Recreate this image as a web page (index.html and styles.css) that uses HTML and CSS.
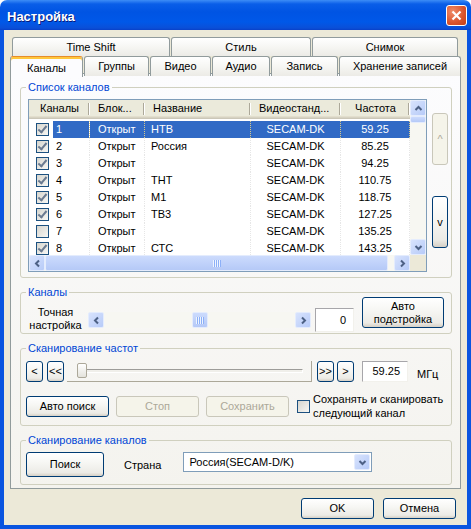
FILE: index.html
```html
<!DOCTYPE html>
<html lang="ru">
<head>
  <meta charset="UTF-8">
  <title>Настройка</title>
  <link rel="stylesheet" href="styles.css">
</head>
<body>

  <div class="window">

    <!-- TITLE BAR -->
    <div class="titlebar">
      <span class="title">Настройка</span>
      <span class="close-btn">
        <svg width="11" height="11" viewBox="0 0 11 11"><path d="M1.5 1.5 L9.5 9.5 M9.5 1.5 L1.5 9.5" stroke="#fff" stroke-width="2.2"/></svg>
      </span>
    </div>

    <div class="client">

      <!-- TABS -->
      <div class="tabs">
        <div class="tabrow tabrow-top">
          <div class="tab">Time Shift</div>
          <div class="tab">Стиль</div>
          <div class="tab">Снимок</div>
        </div>
        <div class="tabrow tabrow-bottom">
          <div class="tab active">Каналы</div>
          <div class="tab">Группы</div>
          <div class="tab">Видео</div>
          <div class="tab">Аудио</div>
          <div class="tab">Запись</div>
          <div class="tab">Хранение записей</div>
        </div>
      </div>

      <div class="panel">

        <!-- CHANNEL LIST -->
        <fieldset class="group group-list">
          <legend>Список каналов</legend>
          <div class="list-wrap">
            <div class="listview">
              <div class="lv-body">
                <div class="lv-head">
                  <div class="hcell center">Каналы</div>
                  <div class="hcell">Блок...</div>
                  <div class="hcell">Название</div>
                  <div class="hcell">Видеостанд...</div>
                  <div class="hcell center">Частота</div>
                </div>
                <div class="lv-rows">
                  <div class="lv-row selected">
                    <div class="cell first"><span class="cb checked"></span><span class="num">1</span></div>
                    <div class="cell">Открыт</div>
                    <div class="cell name">НТВ</div>
                    <div class="cell center">SECAM-DK</div>
                    <div class="cell center">59.25</div>
                  </div>
                  <div class="lv-row">
                    <div class="cell first"><span class="cb checked"></span><span class="num">2</span></div>
                    <div class="cell">Открыт</div>
                    <div class="cell name">Россия</div>
                    <div class="cell center">SECAM-DK</div>
                    <div class="cell center">85.25</div>
                  </div>
                  <div class="lv-row">
                    <div class="cell first"><span class="cb checked"></span><span class="num">3</span></div>
                    <div class="cell">Открыт</div>
                    <div class="cell name"></div>
                    <div class="cell center">SECAM-DK</div>
                    <div class="cell center">94.25</div>
                  </div>
                  <div class="lv-row">
                    <div class="cell first"><span class="cb checked"></span><span class="num">4</span></div>
                    <div class="cell">Открыт</div>
                    <div class="cell name">ТНТ</div>
                    <div class="cell center">SECAM-DK</div>
                    <div class="cell center">110.75</div>
                  </div>
                  <div class="lv-row">
                    <div class="cell first"><span class="cb checked"></span><span class="num">5</span></div>
                    <div class="cell">Открыт</div>
                    <div class="cell name">М1</div>
                    <div class="cell center">SECAM-DK</div>
                    <div class="cell center">118.75</div>
                  </div>
                  <div class="lv-row">
                    <div class="cell first"><span class="cb checked"></span><span class="num">6</span></div>
                    <div class="cell">Открыт</div>
                    <div class="cell name">ТВ3</div>
                    <div class="cell center">SECAM-DK</div>
                    <div class="cell center">127.25</div>
                  </div>
                  <div class="lv-row">
                    <div class="cell first"><span class="cb"></span><span class="num">7</span></div>
                    <div class="cell">Открыт</div>
                    <div class="cell name"></div>
                    <div class="cell center">SECAM-DK</div>
                    <div class="cell center">135.25</div>
                  </div>
                  <div class="lv-row">
                    <div class="cell first"><span class="cb checked"></span><span class="num">8</span></div>
                    <div class="cell">Открыт</div>
                    <div class="cell name">СТС</div>
                    <div class="cell center">SECAM-DK</div>
                    <div class="cell center">143.25</div>
                  </div>
                </div>
              </div>

              <div class="vscroll">
                <span class="sb-btn"><svg width="9" height="9" viewBox="0 0 9 9"><path d="M1.5 6 L4.5 3 L7.5 6" fill="none" stroke="#4D6185" stroke-width="2"/></svg></span>
                <span class="sb-thumb small"></span>
                <span class="sb-track"></span>
                <span class="sb-btn"><svg width="9" height="9" viewBox="0 0 9 9"><path d="M1.5 3 L4.5 6 L7.5 3" fill="none" stroke="#4D6185" stroke-width="2"/></svg></span>
              </div>

              <div class="hscroll">
                <span class="sb-btn"><svg width="9" height="9" viewBox="0 0 9 9"><path d="M6 1.5 L3 4.5 L6 7.5" fill="none" stroke="#4D6185" stroke-width="2"/></svg></span>
                <span class="sb-thumb wide"></span>
                <span class="sb-track"></span>
                <span class="sb-btn"><svg width="9" height="9" viewBox="0 0 9 9"><path d="M3 1.5 L6 4.5 L3 7.5" fill="none" stroke="#4D6185" stroke-width="2"/></svg></span>
              </div>
              <div class="lv-corner"></div>
            </div>

            <div class="side-btns">
              <button class="btn tall" disabled>^</button>
              <button class="btn tall">v</button>
            </div>
          </div>
        </fieldset>

        <!-- FINE TUNING -->
        <fieldset class="group group-fine">
          <legend>Каналы</legend>
          <div class="fine-row">
            <div class="fine-label">Точная<br>настройка</div>
            <div class="hscroll fine-scroll">
              <span class="sb-btn"><svg width="9" height="9" viewBox="0 0 9 9"><path d="M6 1.5 L3 4.5 L6 7.5" fill="none" stroke="#4D6185" stroke-width="2"/></svg></span>
              <span class="sb-track left"></span>
              <span class="sb-thumb"></span>
              <span class="sb-track"></span>
              <span class="sb-btn"><svg width="9" height="9" viewBox="0 0 9 9"><path d="M3 1.5 L6 4.5 L3 7.5" fill="none" stroke="#4D6185" stroke-width="2"/></svg></span>
            </div>
            <div class="edit edit-fine">0</div>
            <button class="btn btn-auto">Авто<br>подстройка</button>
          </div>
        </fieldset>

        <!-- FREQUENCY SCAN -->
        <fieldset class="group group-scan">
          <legend>Сканирование частот</legend>
          <div class="scan-row">
            <button class="btn step">&lt;</button>
            <button class="btn step">&lt;&lt;</button>
            <div class="trackbar">
              <span class="groove"></span>
              <span class="knob"></span>
            </div>
            <button class="btn step">&gt;&gt;</button>
            <button class="btn step">&gt;</button>
            <div class="edit edit-freq">59.25</div>
            <span class="unit">МГц</span>
          </div>
          <div class="scan-row actions">
            <button class="btn wide">Авто поиск</button>
            <button class="btn wide" disabled>Стоп</button>
            <button class="btn wide" disabled>Сохранить</button>
            <span class="cb"></span>
            <span class="check-label">Сохранять и сканировать<br>следующий канал</span>
          </div>
        </fieldset>

        <!-- CHANNEL SCAN -->
        <fieldset class="group group-search">
          <legend>Сканирование каналов</legend>
          <div class="search-row">
            <button class="btn btn-search">Поиск</button>
            <span class="country">Страна</span>
            <div class="select">
              <span class="value">Россия(SECAM-D/K)</span>
              <span class="sb-btn"><svg width="9" height="9" viewBox="0 0 9 9"><path d="M1.5 3 L4.5 6 L7.5 3" fill="none" stroke="#4D6185" stroke-width="2"/></svg></span>
            </div>
          </div>
        </fieldset>

      </div>

      <div class="footer">
        <button class="btn">OK</button>
        <button class="btn">Отмена</button>
      </div>

    </div>
  </div>

</body>
</html>
```

FILE: styles.css
```css
* { box-sizing: border-box; }
body {
  margin: 0;
  font-family: "Liberation Sans", Arial, sans-serif;
  font-size: 11px;
  color: #000;
  background: #fff;
}
.window {
  width: 471px;
  height: 529px;
  display: flex;
  flex-direction: column;
}

/* title bar */
.titlebar {
  height: 30px;
  flex: none;
  display: flex;
  align-items: center;
  justify-content: space-between;
  padding: 0 4px 0 7px;
  border-radius: 7px 7px 0 0;
  background: linear-gradient(#3D8DF6 0, #0A5EE8 4px, #0054E3 12px, #0058E8 22px, #0A4FD8 28px, #0840C8 30px);
}
.title {
  color: #fff;
  font-weight: bold;
  font-size: 13px;
  text-shadow: 1px 1px 0 #0A1C7A;
  padding-top: 3px;
}
.close-btn {
  width: 21px;
  height: 21px;
  border: 1px solid #fff;
  border-radius: 3px;
  background: radial-gradient(circle at 30% 30%, #F08C6A, #D9532C 60%, #C4401A);
  display: flex;
  align-items: center;
  justify-content: center;
}

.client {
  flex: 1;
  background: #ECE9D8;
  border: 4px solid #0A55E0;
  border-top: none;
  padding: 7px 6px 0 6px;
  display: flex;
  flex-direction: column;
}

/* tabs */
.tabs {
  height: 36px;
  flex: none;
  display: flex;
  flex-direction: column;
  position: relative;
  z-index: 1;
}
.tabrow { display: grid; }
.tabrow-top {
  height: 19px;
  padding-left: 2px;
  grid-template-columns: 158px 140px 146px;
  column-gap: 1px;
}
.tabrow-bottom {
  height: 17px;
  grid-template-columns: 73px 66px 62px 59px 68px 123px;
  align-items: end;
}
.tab {
  height: 100%;
  border: 1px solid #919B9C;
  border-bottom: none;
  border-radius: 3px 3px 0 0;
  background: linear-gradient(#FFFFFF, #F6F6F3 50%, #ECEBE6);
  text-align: center;
  line-height: 15px;
  padding-top: 2px;
  white-space: nowrap;
}
.tabrow-bottom .tab { margin-left: 1px; }
.tabrow-bottom .tab.active {
  height: 21px;
  margin: 0 0 -1px 0;
  background: #FCFCFE;
  border-top: 1px solid #E68B2C;
  box-shadow: inset 0 2px #FFC73C;
  padding-top: 3px;
  line-height: 16px;
}

.panel {
  flex: none;
  height: 416px;
  border: 1px solid #919B9C;
  background: linear-gradient(#FCFCFE, #F4F3EE);
  display: flex;
  flex-direction: column;
  gap: 8px;
  padding: 7px 8px 0 9px;
}

/* group boxes */
.group {
  border: 1px solid #D0D0BF;
  border-radius: 3px;
  margin: 0;
  padding: 0 3px 0 7px;
  min-width: 0;
}
.group legend {
  color: #0046D5;
  padding: 0 2px;
  margin-left: -2px;
  line-height: 13px;
}
.group-list { height: 197px; padding-top: 5px; }
.group-fine { height: 48px; }
.group-scan { height: 84px; padding-left: 5px; padding-top: 6px; }
.group-scan legend { margin-left: 0; }
.group-search { height: 51px; padding-left: 5px; padding-top: 5px; }
.group-search legend { margin-left: 0; }

/* buttons */
.btn {
  font: inherit;
  color: #000;
  border: 1px solid #003C74;
  border-radius: 3px;
  background: linear-gradient(#FFFFFF, #F7F7F4 40%, #ECEBE6 85%, #D6D0C5);
  padding: 0;
  height: 21px;
  line-height: 13px;
}
.btn:disabled {
  border-color: #C9C7BA;
  color: #ACA899;
  background: #F5F4EA;
}

/* list view */
.list-wrap { display: flex; gap: 5px; }
.listview {
  display: grid;
  grid-template-columns: 381px 16px;
  grid-template-rows: 155px 16px;
  border: 1px solid #7F9DB9;
  background: #fff;
}
.lv-body { overflow: hidden; }
.lv-head, .lv-row {
  display: grid;
  grid-template-columns: 61px 55px 106px 90px 69px;
}
.lv-head {
  height: 19px;
  background: #EBEADB;
  box-shadow: inset 0 -1px #CBC7B8, inset 0 -2px #D6D2C2, inset 0 -3px #E2DECD;
}
.hcell {
  padding-left: 8px;
  line-height: 17px;
  white-space: nowrap;
  background:
    linear-gradient(#ACA899, #ACA899) right 1px top 3px / 1px 12px no-repeat,
    linear-gradient(#fff, #fff) right 0 top 3px / 1px 12px no-repeat;
}
.hcell.center { padding-left: 0; text-align: center; }
.lv-rows { padding-top: 2px; }
.lv-row { height: 17px; line-height: 17px; }
.cell {
  padding-left: 8px;
  white-space: nowrap;
  overflow: hidden;
  border-right: 1px dotted #E6E6E6;
}
.cell.name { padding-left: 6px; }
.cell.center { padding-left: 0; text-align: center; }
.cell.first {
  display: flex;
  align-items: center;
  padding-left: 7px;
}
.num {
  flex: 1;
  height: 100%;
  margin-left: 4px;
  padding-left: 3px;
}
.lv-row.selected .num,
.lv-row.selected .cell:not(.first) {
  background: #316AC5;
  color: #fff;
}
.lv-row.selected .cell { border-right-color: #D8C98A; }

/* check box */
.cb {
  width: 13px;
  height: 13px;
  flex: none;
  border: 1px solid #1C5180;
  background: linear-gradient(135deg, #D6D5CE, #F7F7F4);
  position: relative;
}
.cb.checked::after {
  content: "";
  position: absolute;
  left: 3px;
  top: 0;
  width: 3px;
  height: 7px;
  border: solid #6A7A90;
  border-width: 0 2px 2px 0;
  transform: rotate(40deg);
}

/* scroll bars */
.sb-btn {
  width: 16px;
  height: 16px;
  flex: none;
  display: flex;
  align-items: center;
  justify-content: center;
  border: 1px solid #E4ECFD;
  border-radius: 2px;
  background: linear-gradient(135deg, #D8E3FD, #B7CBF8);
}
.sb-track { flex: 1; }
.sb-thumb {
  flex: none;
  border: 1px solid #E4ECFD;
  border-radius: 2px;
  background: linear-gradient(#CCDBFD, #B5C9F7);
  display: flex;
  align-items: center;
  justify-content: center;
}
.hscroll .sb-thumb { width: 16px; }
.hscroll .sb-thumb::after {
  content: "";
  width: 8px;
  height: 7px;
  background: repeating-linear-gradient(90deg, #EEF4FE 0 1px, #8CB0F8 1px 2px);
}
.hscroll .sb-thumb.wide { width: 343px; }
.vscroll .sb-thumb.small { height: 7px; }
.vscroll {
  display: flex;
  flex-direction: column;
  background: #F7F7F2;
}
.hscroll {
  display: flex;
  background: #F7F7F2;
}
.lv-corner { background: #ECE9D8; }

.side-btns {
  width: 16px;
  display: flex;
  flex-direction: column;
  gap: 31px;
  padding-top: 14px;
}
.btn.tall { height: 52px; width: 16px; }

/* fine tuning row */
.fine-row {
  display: flex;
  align-items: flex-end;
  height: 35px;
  margin-top: -2px;
}
.fine-label {
  width: 55px;
  text-align: center;
  line-height: 13px;
}
.fine-scroll {
  width: 223px;
  height: 16px;
  margin: 0 0 4px 5px;
}
.fine-scroll .sb-track.left { flex: none; width: 88px; }
.edit {
  background: #fff;
  border: 1px solid;
  border-color: #A7A6AA #F2F1EC #F2F1EC #A7A6AA;
  text-align: right;
  padding-right: 7px;
}
.edit-fine {
  width: 39px;
  height: 24px;
  line-height: 22px;
  margin: 0 0 0 4px;
}
.btn-auto {
  width: 82px;
  height: 31px;
  margin-left: 8px;
  align-self: flex-start;
}

/* frequency scan */
.scan-row {
  display: flex;
  align-items: center;
  height: 21px;
}
.btn.step { width: 17px; }
.btn.step + .btn.step { margin-left: 4px; }
.scan-row .btn.step:nth-child(2) { margin-left: 4px; }
.scan-row .btn.step:nth-child(4) { margin-left: 5px; }
.scan-row .btn.step:nth-child(5) { margin-left: 3px; }
.trackbar {
  width: 245px;
  height: 21px;
  margin-left: 3px;
  border-right: 1px solid #ACA899;
  border-bottom: 1px solid #ACA899;
  position: relative;
  display: flex;
  align-items: center;
  padding: 0 8px 0 13px;
}
.groove {
  flex: 1;
  height: 4px;
  border: 1px solid;
  border-color: #9D9C99 #fff #fff #9D9C99;
  background: #F0EFEA;
}
.knob {
  position: absolute;
  left: 10px;
  top: 2px;
  width: 10px;
  height: 15px;
  border: 1px solid #ACA899;
  border-radius: 2px;
  background: linear-gradient(#FFFFFF, #E4E3DC);
}
.edit-freq {
  width: 46px;
  height: 21px;
  line-height: 19px;
  margin-left: 8px;
}
.unit { margin-left: 9px; padding-top: 5px; }
.scan-row.actions {
  height: 28px;
  margin-top: 10px;
}
.btn.wide { width: 83px; }
.btn.wide + .btn.wide { margin-left: 7px; }
.actions .cb { margin-left: 8px; }
.check-label { margin-left: 3px; line-height: 14px; }

/* channel scan */
.search-row {
  display: flex;
  align-items: center;
}
.btn-search { width: 78px; height: 25px; }
.country { margin-left: 20px; }
.select {
  width: 189px;
  height: 20px;
  margin-left: 22px;
  align-self: flex-start;
  border: 1px solid #7F9DB9;
  background: #fff;
  display: flex;
  align-items: center;
  padding: 1px;
}
.select .value { flex: 1; padding-left: 4px; }

.footer {
  flex: 1;
  display: flex;
  justify-content: flex-end;
  align-items: flex-start;
  gap: 9px;
  padding: 9px 5px 0 0;
}
.footer .btn { width: 73px; }
```
